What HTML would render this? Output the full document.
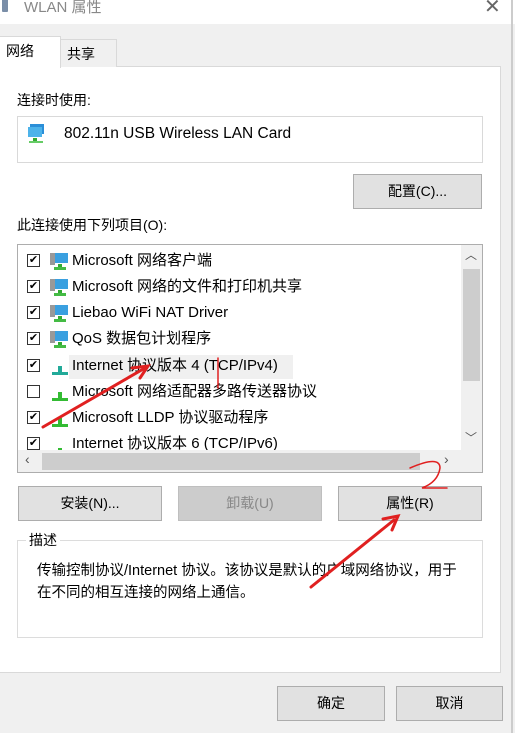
<!DOCTYPE html>
<html><head><meta charset="utf-8"><style>
*{margin:0;padding:0;box-sizing:border-box}
body{width:515px;height:737px;background:#f0f0f0;font-family:"Liberation Sans","Noto Sans CJK SC",sans-serif;font-size:14px;color:#000;position:relative;overflow:hidden}
.a{position:absolute}
.btn{position:absolute;background:#e1e1e1;border:1px solid #adadad;text-align:center;font-size:14px;line-height:32px}
.row{position:absolute;left:9px;height:22px;line-height:22px;white-space:nowrap;font-size:15px}
.cb{position:absolute;left:0;top:4px;width:13px;height:13px;border:1px solid #333;background:#fff;font-size:11px;line-height:11px;text-align:center}
.ic{position:absolute;left:22px;top:1px;width:20px;height:20px}
.tx{position:absolute;left:45px;top:0}
</style></head><body>
<div class="a" style="left:0;top:0;width:515px;height:24px;background:#fff"></div>
<div class="a" style="left:2px;top:-2px;width:6px;height:14px;background:#7a8ea8;border-radius:1px"></div>
<div class="a" style="left:24px;top:-4px;font-size:15px;color:#888">WLAN 属性</div>
<div class="a" style="left:484px;top:-6px;font-size:20px;color:#666">✕</div>
<div class="a" style="left:511px;top:0;width:2px;height:737px;background:#ccc"></div>
<div class="a" style="left:0;top:733px;width:515px;height:4px;background:#fff"></div>
<div class="a" style="left:-1px;top:66px;width:502px;height:607px;background:#fff;border:1px solid #d9d9d9"></div>
<div class="a" style="left:60px;top:39px;width:57px;height:28px;background:#f0f0f0;border:1px solid #d9d9d9;border-bottom:none"></div>
<div class="a" style="left:67px;top:44px">共享</div>
<div class="a" style="left:-1px;top:36px;width:62px;height:32px;background:#fff;border:1px solid #d9d9d9;border-bottom:none"></div>
<div class="a" style="left:6px;top:41px">网络</div>
<div class="a" style="left:17px;top:90px">连接时使用:</div>
<div class="a" style="left:17px;top:116px;width:466px;height:47px;border:1px solid #d9d9d9;background:#fff"></div>
<svg class="a" style="left:27px;top:123px" width="22" height="22"><rect x="3" y="1" width="14" height="10" fill="#2b8fd8"/><rect x="1" y="4" width="14" height="10" fill="#4db3ea"/><rect x="6" y="15" width="4" height="3" fill="#3a3"/><rect x="2" y="18" width="14" height="2" fill="#6c6"/></svg>
<div class="a" style="left:64px;top:125px;font-size:15.5px">802.11n USB Wireless LAN Card</div>
<div class="btn" style="left:353px;top:174px;width:129px;height:35px">配置(C)...</div>
<div class="a" style="left:17px;top:215px">此连接使用下列项目(O):</div>
<div class="a" style="left:17px;top:244px;width:466px;height:229px;border:1px solid #adadad;background:#fff;overflow:hidden">
 <div class="row" style="top:5px"><div class="cb">✔</div><svg class="ic"><rect x="6" y="2" width="13" height="10" fill="#3aa0e0"/><rect x="1" y="2" width="5" height="12" fill="#999"/><rect x="9" y="13" width="4" height="3" fill="#3a3"/><rect x="5" y="16" width="12" height="3" fill="#4b4"/></svg><div class="tx">Microsoft 网络客户端</div></div>
 <div class="row" style="top:31px"><div class="cb">✔</div><svg class="ic"><rect x="6" y="2" width="13" height="10" fill="#3aa0e0"/><rect x="1" y="2" width="5" height="12" fill="#999"/><rect x="9" y="13" width="4" height="3" fill="#3a3"/><rect x="5" y="16" width="12" height="3" fill="#4b4"/></svg><div class="tx">Microsoft 网络的文件和打印机共享</div></div>
 <div class="row" style="top:57px"><div class="cb">✔</div><svg class="ic"><rect x="6" y="2" width="13" height="10" fill="#3aa0e0"/><rect x="1" y="2" width="5" height="12" fill="#999"/><rect x="9" y="13" width="4" height="3" fill="#3a3"/><rect x="5" y="16" width="12" height="3" fill="#4b4"/></svg><div class="tx">Liebao WiFi NAT Driver</div></div>
 <div class="row" style="top:83px"><div class="cb">✔</div><svg class="ic"><rect x="6" y="2" width="13" height="10" fill="#3aa0e0"/><rect x="1" y="2" width="5" height="12" fill="#999"/><rect x="9" y="13" width="4" height="3" fill="#3a3"/><rect x="5" y="16" width="12" height="3" fill="#4b4"/></svg><div class="tx">QoS 数据包计划程序</div></div>
 <div class="a" style="left:51px;top:110px;width:224px;height:24px;background:#f0f0f0"></div>
 <div class="row" style="top:110px"><div class="cb">✔</div><svg class="ic"><rect x="9" y="10" width="4" height="6" fill="#2a9"/><rect x="3" y="16" width="16" height="3" fill="#2a9"/></svg><div class="tx">Internet 协议版本 4 (TCP/IPv4)</div></div>
 <div class="row" style="top:136px"><div class="cb"></div><svg class="ic"><rect x="9" y="10" width="4" height="6" fill="#3b3"/><rect x="3" y="16" width="16" height="3" fill="#3b3"/></svg><div class="tx">Microsoft 网络适配器多路传送器协议</div></div>
 <div class="row" style="top:162px"><div class="cb">✔</div><svg class="ic"><rect x="9" y="10" width="4" height="6" fill="#3b3"/><rect x="3" y="16" width="16" height="3" fill="#3b3"/></svg><div class="tx">Microsoft LLDP 协议驱动程序</div></div>
 <div class="row" style="top:188px"><div class="cb">✔</div><svg class="ic"><rect x="9" y="14" width="4" height="5" fill="#3b3"/></svg><div class="tx">Internet 协议版本 6 (TCP/IPv6)</div></div>
 <div class="a" style="left:443px;top:0;width:21px;height:205px;background:#f0f0f0"></div>
 <div class="a" style="left:445px;top:24px;width:17px;height:112px;background:#cdcdcd"></div>
 <div class="a" style="left:447px;top:1px;font-size:12px;color:#555">︿</div>
 <div class="a" style="left:447px;top:184px;font-size:12px;color:#555">﹀</div>
 <div class="a" style="left:0;top:205px;width:464px;height:22px;background:#f0f0f0"></div>
 <div class="a" style="left:24px;top:208px;width:378px;height:17px;background:#cdcdcd"></div>
 <div class="a" style="left:7px;top:206px;font-size:14px;color:#555">‹</div>
 <div class="a" style="left:426px;top:206px;font-size:14px;color:#555">›</div>
</div>
<div class="btn" style="left:18px;top:486px;width:144px;height:35px">安装(N)...</div>
<div class="btn" style="left:178px;top:486px;width:144px;height:35px;background:#ccc;border-color:#bfbfbf;color:#888">卸载(U)</div>
<div class="btn" style="left:338px;top:486px;width:144px;height:35px">属性(R)</div>
<div class="a" style="left:17px;top:540px;width:466px;height:98px;border:1px solid #dcdcdc"></div>
<div class="a" style="left:26px;top:530px;background:#fff;padding:0 3px">描述</div>
<div class="a" style="left:37px;top:560px;width:430px;line-height:22px;font-size:14.5px">传输控制协议/Internet 协议。该协议是默认的广域网络协议，用于在不同的相互连接的网络上通信。</div>
<div class="btn" style="left:277px;top:686px;width:108px;height:35px">确定</div>
<div class="btn" style="left:396px;top:686px;width:107px;height:35px">取消</div>
<svg class="a" style="left:0;top:0" width="515" height="737">
<g stroke="#e02020" stroke-width="3" fill="none" stroke-linecap="round">
<path d="M43 427 L145 368"/><path d="M132 368 L148 366 L140 378"/>
<path d="M218 358 L218 388" stroke-width="1.5"/>
<path d="M311 587 L394 520"/><path d="M383 519 L398 516 L392 530"/>
<path d="M410 468 Q440 455 440 468 Q438 482 422 488 L447 488" stroke-width="1.5"/>
</g></svg>
</body></html>
